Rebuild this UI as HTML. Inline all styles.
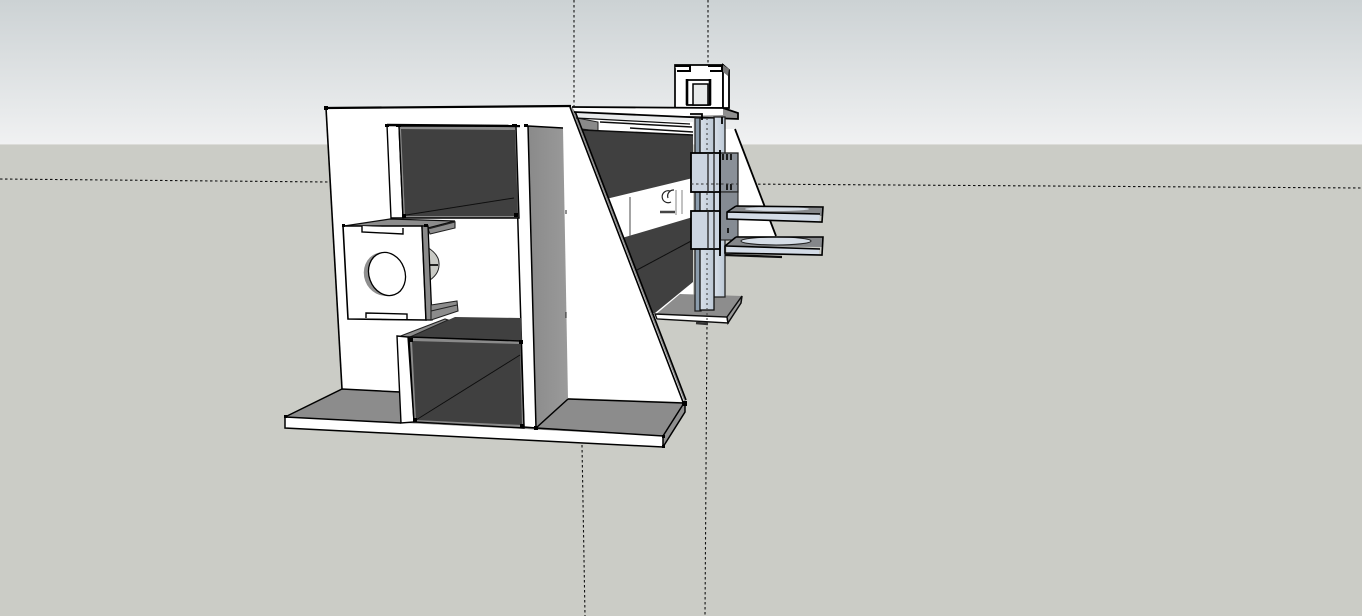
<!DOCTYPE html>
<html><head><meta charset="utf-8"><title>Model</title>
<style>html,body{margin:0;padding:0;background:#cbccc6;overflow:hidden}svg{display:block}</style></head>
<body>
<svg width="1362" height="616" viewBox="0 0 1362 616" xmlns="http://www.w3.org/2000/svg">
<defs>
<linearGradient id="sky" x1="0" y1="0" x2="0" y2="1"><stop offset="0" stop-color="#ccd2d4"/><stop offset="1" stop-color="#f0f1f2"/></linearGradient>
<linearGradient id="col" x1="0" y1="0" x2="1" y2="0"><stop offset="0" stop-color="#d8e0ea"/><stop offset="1" stop-color="#bcc8d5"/></linearGradient>
<linearGradient id="gcol" x1="0" y1="0" x2="1" y2="0"><stop offset="0" stop-color="#8a8a8a"/><stop offset="1" stop-color="#9a9a9a"/></linearGradient>
<filter id="soft" x="0" y="0" width="100%" height="100%" filterUnits="userSpaceOnUse"><feGaussianBlur stdDeviation="0.35"/></filter>
</defs>
<rect width="1362" height="144" fill="url(#sky)"/>
<rect y="144" width="1362" height="472" fill="#cbccc6"/>
<rect y="144" width="1362" height="1" fill="#dcdcd9"/>
<g fill="none" stroke="#111" stroke-width="1.1" stroke-dasharray="2.5 2.5">
<path d="M0 179L328 182"/><path d="M738 184L1362 188"/>
<path d="M574 0V107"/><path d="M708 0V66"/>
<path d="M582 445L585 616"/><path d="M707 322L705 616"/>
</g>

<g filter="url(#soft)">
<!-- far triangle -->
<polygon points="735,129 776,236 725,236 725,129" fill="#fff"/>
<path d="M735 129L776 236" stroke="#000" stroke-width="1.8" fill="none"/>

<!-- back area -->
<polygon points="575,118 693,122 693,320 640,320" fill="#fff"/>
<polygon points="577,118 598,122 598,131 582,129" fill="#8a8a8a" stroke="#222" stroke-width="1"/>
<path d="M600 122L692 127M630 128L693 132" stroke="#111" stroke-width="1.5" fill="none"/>
<polygon points="582,130 693,135 693,178 606,199" fill="#404040"/>
<path d="M582 130L693 135" stroke="#111" stroke-width="1.6"/>
<polygon points="622,238 693,217 693,282 655,313 650,313" fill="#404040"/>
<path d="M637 270L693 240" stroke="#111" stroke-width="1"/>
<path d="M630 197V236" stroke="#666" stroke-width="1.2"/>
<path d="M676 190V215M682 190V214" stroke="#999" stroke-width="1.2"/>
<path d="M670 191a6 6 0 1 0 1 11M674 190a6 6 0 0 0 -6 8" fill="none" stroke="#222" stroke-width="1.2"/>
<path d="M660 212H675" stroke="#444" stroke-width="2.5"/>

<!-- bottom plate right -->
<polygon points="655,315 680,294 742,296 727,317" fill="#8d8d8d"/>
<polygon points="655,314 727,317 728,323 657,319" fill="#fff" stroke="#111" stroke-width="1.4"/>
<polygon points="727,317 742,296 741,303 728,323" fill="#9a9a9a" stroke="#111" stroke-width="1.5"/>
<path d="M696 323L708 324" stroke="#333" stroke-width="2.5"/>

<!-- main panel -->
<polygon points="326,108 571,106 685,402 342,390" fill="#fff"/>
<polygon points="285,417 342,389 684,403 663,436" fill="#8c8c8c"/>
<polygon points="285,417 663,436 663,447 285,428" fill="#fff"/>
<polygon points="663,436 684,403 685,412 663,447" fill="#8f8f8f"/>
<path d="M285 417L342 389L400 392M285 417L401 423M536 428L663 436L684 403M568 399L684 403M285 417V428L663 447L685 412V403M663 436V447" fill="none" stroke="#000" stroke-width="1.5"/>
<path d="M326 108L342 389" stroke="#000" stroke-width="1.6"/>
<path d="M326 108L571 106" stroke="#000" stroke-width="2.2"/>
<path d="M570 107L683 402" stroke="#000" stroke-width="1.6"/>
<path d="M571.8 107L685 401" stroke="#8a8a8a" stroke-width="1.6"/>
<path d="M573.4 107L686 400" stroke="#000" stroke-width="1.6"/>

<!-- gray column -->
<polygon points="528,126 563,128 568,399 536,428" fill="url(#gcol)"/>
<polygon points="515,126 528,126 536,428 523,427" fill="#fff"/>
<path d="M528 126L536 428L568 399M528 126L563 128M515 126L524 427L536 428" fill="none" stroke="#000" stroke-width="1.5"/>
<path d="M566 210V214M566 312V318" stroke="#222" stroke-width="1"/>

<!-- upper window -->
<polygon points="387,125 399,125 403,218 391,218" fill="#fff" stroke="#000" stroke-width="1.4"/>
<polygon points="399,126 516,126 519,218 403,218" fill="#8a8a8a" stroke="#000" stroke-width="1.4"/>
<polygon points="401,129 515,130 518,216 405,216" fill="#404040"/>
<path d="M406 215L514 198" stroke="#111" stroke-width="1"/>
<path d="M387 125L520 126" stroke="#000" stroke-width="2.4"/>

<!-- half disc -->
<path d="M427 247Q440 255 439 265Q439 275 427 282Z" fill="#c9cac5" stroke="#222" stroke-width="1"/>
<path d="M428 265H438" stroke="#111" stroke-width="1.8"/>

<!-- square box -->
<polygon points="344,226 390,219 455,221 428,228" fill="#8c8c8c" stroke="#111" stroke-width="1.3"/>
<polygon points="428,229 455,222 455,228 430,234" fill="#8c8c8c" stroke="#222" stroke-width="1.1"/>
<polygon points="343,226 422,226 426,320 348,319" fill="#fff" stroke="#000" stroke-width="1.6"/>
<polygon points="422,226 428,226 432,320 426,320" fill="#8a8a8a" stroke="#000" stroke-width="1.3"/>
<ellipse cx="384" cy="274" rx="20" ry="22" transform="rotate(-20 384 274)" fill="#8f8f8f"/>
<ellipse cx="387" cy="274" rx="18" ry="22" transform="rotate(-20 387 274)" fill="#fff" stroke="#000" stroke-width="1.3"/>
<path d="M362 226V232L403 234V228" fill="#fff" stroke="#000" stroke-width="1.4"/>
<path d="M366 318V313L407 314V319" fill="#fff" stroke="#000" stroke-width="1.4"/>
<polygon points="431,305 457,301 458,311 431,320" fill="#8c8c8c" stroke="#222" stroke-width="1.1"/>
<path d="M431 311L457 305" stroke="#222" stroke-width="1"/>

<!-- lower dark box -->
<polygon points="455,317 521,318 522,342 410,337" fill="#404040"/>
<polygon points="398,337 445,319 448,320 410,337" fill="#8c8c8c" stroke="#222" stroke-width="1.1"/>
<polygon points="397,336 408,337 414,422 401,423" fill="#fff" stroke="#000" stroke-width="1.4"/>
<polygon points="409,337 521,341 524,428 414,422" fill="#8a8a8a" stroke="#000" stroke-width="1.4"/>
<polygon points="412,341 520,344 522,425 416,420" fill="#404040"/>
<path d="M416 420L520 355" stroke="#111" stroke-width="1"/>

<!-- corner marks -->
<g fill="#000">
<rect x="324" y="106" width="4" height="4"/><rect x="385" y="124" width="4" height="3"/><rect x="396" y="124" width="5" height="3"/><rect x="512" y="124" width="5" height="3"/><rect x="524" y="124" width="4" height="3"/>
<rect x="402" y="214" width="4" height="4"/><rect x="514" y="213" width="4" height="4"/><rect x="342" y="224" width="3" height="3"/><rect x="424" y="224" width="4" height="3"/>
<rect x="409" y="338" width="4" height="4"/><rect x="519" y="340" width="4" height="4"/><rect x="413" y="418" width="4" height="4"/><rect x="520" y="424" width="4" height="4"/>
<rect x="284" y="415" width="3" height="3"/><rect x="534" y="426" width="4" height="4"/><rect x="662" y="435" width="3" height="3"/><rect x="662" y="445" width="3" height="3"/><rect x="682" y="401" width="5" height="5"/>
</g>

<!-- top plate and motor -->
<polygon points="675,65 723,65 723,108 675,108" fill="#fff" stroke="#000" stroke-width="1.7"/>
<polygon points="723,65 729,70 729,108 723,108" fill="#fff" stroke="#000" stroke-width="1.8"/>
<polygon points="723,65 729,69 728,76 723,72" fill="#777"/>
<path d="M675 66H690V71H677M708 66H722V71H710" fill="#fff" stroke="#000" stroke-width="2"/>
<polygon points="687,80 710,80 710,105 687,105" fill="#fff" stroke="#000" stroke-width="1.7"/>
<polygon points="693,84 708,84 708,105 693,105" fill="#e8eaea" stroke="#000" stroke-width="1.5"/>
<path d="M687 79V105M710 79V105" stroke="#000" stroke-width="2.6"/>
<polygon points="572,107 723,108 738,113 738,119 687,117 575,112" fill="#fff"/>
<polygon points="723,108 738,113 738,119 662,116 687,116 723,115" fill="#8f8f8f"/>
<path d="M572 107L723 108L738 113V119L687 117L574 112" fill="none" stroke="#000" stroke-width="1.8"/>
<path d="M576 118L690 124" stroke="#111" stroke-width="1.2"/>

<!-- columns -->
<rect x="714" y="117" width="11" height="180" fill="url(#col)" stroke="#222" stroke-width="1.3"/>
<rect x="695" y="118" width="6" height="193" fill="#8b9cac" stroke="#222" stroke-width="1.3"/>
<rect x="700" y="118" width="14" height="192" fill="url(#col)" stroke="#111" stroke-width="1.3"/>
<path d="M707 118V320" stroke="#444" stroke-width="1.1" stroke-dasharray="2 3"/>
<path d="M690 114H702V120M722 117V124" stroke="#000" stroke-width="1.8" fill="none"/>

<!-- clamps -->
<rect x="720" y="153" width="18" height="39" fill="#8a9098" stroke="#222" stroke-width="1.3"/>
<rect x="720" y="192" width="18" height="48" fill="#858b93" stroke="#222" stroke-width="1.1"/>
<rect x="691" y="153" width="29" height="39" fill="#ccd5e1" stroke="#000" stroke-width="1.8"/>
<rect x="691" y="211" width="29" height="38" fill="#ccd5e1" stroke="#000" stroke-width="1.8"/>
<path d="M708 153V192M714 153V192M708 211V249M714 211V249" stroke="#222" stroke-width="1.3"/>
<path d="M720 150V256" stroke="#000" stroke-width="1.9"/>
<path d="M723 154V160M727 154V160M731 154V160M727 184V190M731 184V190M728 228V233" stroke="#111" stroke-width="1.8"/>
<path d="M691 184H738" stroke="#333" stroke-width="1" stroke-dasharray="2.5 2.5"/>

<!-- arms -->
<polygon points="725,219 736,206 823,207 822,216 727,213" fill="#85878a"/>
<ellipse cx="777" cy="209" rx="32" ry="2" fill="#d5dce5"/>
<polygon points="727,212 820,214 819,222 727,219" fill="#d3dbe6"/>
<path d="M736 206L823 207L822 222L727 219V212L736 206M727 212L820 214" fill="none" stroke="#000" stroke-width="1.6"/>
<polygon points="726,246 736,237 823,237 822,247 726,246" fill="#85878a"/>
<ellipse cx="776" cy="241" rx="35" ry="4" fill="#d5dce5" stroke="#222" stroke-width="1.1"/>
<polygon points="727,247 819,249 819,255 727,253" fill="#d3dbe6"/>
<path d="M736 237L823 237L822 255L725 253V246L736 237M726 246L820 249" fill="none" stroke="#000" stroke-width="1.6"/>
<path d="M725 255L782 257" stroke="#111" stroke-width="2.2"/>
</g>
</svg>
</body></html>
